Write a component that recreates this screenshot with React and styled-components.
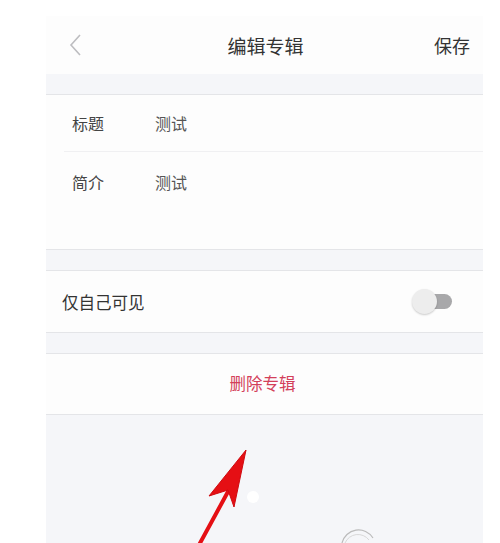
import styled, { createGlobalStyle } from 'styled-components';

const Global = createGlobalStyle`
  html, body {
    margin: 0;
    padding: 0;
    background: #ffffff;
  }
  body {
    font-family: "Noto Sans CJK SC", "Noto Sans", sans-serif;
  }
`;

const Page = styled.div`
  width: 500px;
  height: 543px;
  padding: 16px 17px 0 46px;
  box-sizing: border-box;
  overflow: hidden;
  position: relative;
`;

const Screen = styled.div`
  height: 100%;
  background: #f5f6f9;
  display: flex;
  flex-direction: column;
`;

const NavBar = styled.div`
  height: 58px;
  background: #fdfdfd;
  display: grid;
  grid-template-columns: 80px 1fr 80px;
  align-items: center;
`;

const Back = styled.div`
  padding-left: 23px;
  display: flex;
  align-items: center;
`;

const NavTitle = styled.div`
  text-align: center;
  font-size: 19px;
  color: #333;
  padding-left: 2px;
`;

const NavAction = styled.div`
  text-align: right;
  padding-right: 13px;
  font-size: 18px;
  color: #333;
`;

const Gap = styled.div`
  height: 20px;
  background: #f5f6f9;
  border-top: ${(p) => (p.top ? '1px solid #e4e5e8' : 'none')};
  border-bottom: 1px solid #e4e5e8;
`;

const Card = styled.div`
  background: #fdfdfd;
  display: flex;
  flex-direction: column;
`;

const Field = styled.div`
  display: flex;
  align-items: ${(p) => (p.tall ? 'flex-start' : 'center')};
  height: ${(p) => p.h}px;
  padding: ${(p) => (p.tall ? '18px' : '0')} 0 0 26px;
  box-sizing: border-box;
  font-size: 16px;
`;

const Divider = styled.div`
  height: 1px;
  margin-left: 18px;
  background: #f0f0f2;
`;

const Label = styled.span`
  width: 83px;
  color: #444;
`;

const Value = styled.span`
  color: #555;
`;

const ToggleRow = styled.div`
  height: 61px;
  background: #fdfdfd;
  display: flex;
  align-items: center;
  justify-content: space-between;
  padding: 0 31px 0 16px;
  font-size: 16.5px;
  color: #333;
`;

const Track = styled.div`
  width: 33px;
  height: 15px;
  border-radius: 8px;
  background: #a8a8aa;
  position: relative;
`;

const Knob = styled.div`
  position: absolute;
  left: -7px;
  top: -5px;
  width: 25px;
  height: 25px;
  border-radius: 50%;
  background: #ededed;
  box-shadow: 0 1px 2px rgba(0, 0, 0, 0.2);
`;

const DangerRow = styled.div`
  height: 61px;
  box-sizing: border-box;
  background: #fdfdfd;
  display: flex;
  align-items: center;
  justify-content: center;
  font-size: 16.5px;
  color: #d3405a;
  border-bottom: 1px solid #e4e5e8;
  padding: 0 4px 2px 0;
`;

const Rest = styled.div`
  flex: 1;
  background: #f5f6f9;
`;

const Markup = styled.svg`
  position: absolute;
  left: 0;
  top: 0;
  pointer-events: none;
`;

export default function App() {
  return (
    <>
      <Global />
      <Page>
        <Screen>
          <NavBar>
            <Back>
              <svg width="14" height="24" viewBox="0 0 14 24">
                <path d="M11 2 L2 12 L11 22" fill="none" stroke="#bdbdc0" strokeWidth="1.6" />
              </svg>
            </Back>
            <NavTitle>编辑专辑</NavTitle>
            <NavAction>保存</NavAction>
          </NavBar>
          <Gap />
          <Card>
            <Field h={56}>
              <Label>标题</Label>
              <Value>测试</Value>
            </Field>
            <Divider />
            <Field h={97} tall>
              <Label>简介</Label>
              <Value>测试</Value>
            </Field>
          </Card>
          <Gap top />
          <ToggleRow>
            <span>仅自己可见</span>
            <Track>
              <Knob />
            </Track>
          </ToggleRow>
          <Gap top />
          <DangerRow>删除专辑</DangerRow>
          <Rest />
        </Screen>
        <Markup width="500" height="543" viewBox="0 0 500 543">
          <circle cx="253" cy="497" r="6" fill="#ffffff" />
          <path d="M342 543 A17 17 0 0 1 373 538" fill="none" stroke="#bbbbbb" strokeWidth="1.2" />
          <path d="M345 543 A14 14 0 0 1 369 540" fill="none" stroke="#d8d8d8" strokeWidth="1" />
          <line x1="199" y1="545" x2="230" y2="488" stroke="#e50f14" strokeWidth="4" strokeLinecap="round" />
          <path d="M246 450 L209 496 L228 490 L234 507 Z" fill="#e50f14" stroke="#d00a10" strokeWidth="1" strokeLinejoin="round" />
        </Markup>
      </Page>
    </>
  );
}
